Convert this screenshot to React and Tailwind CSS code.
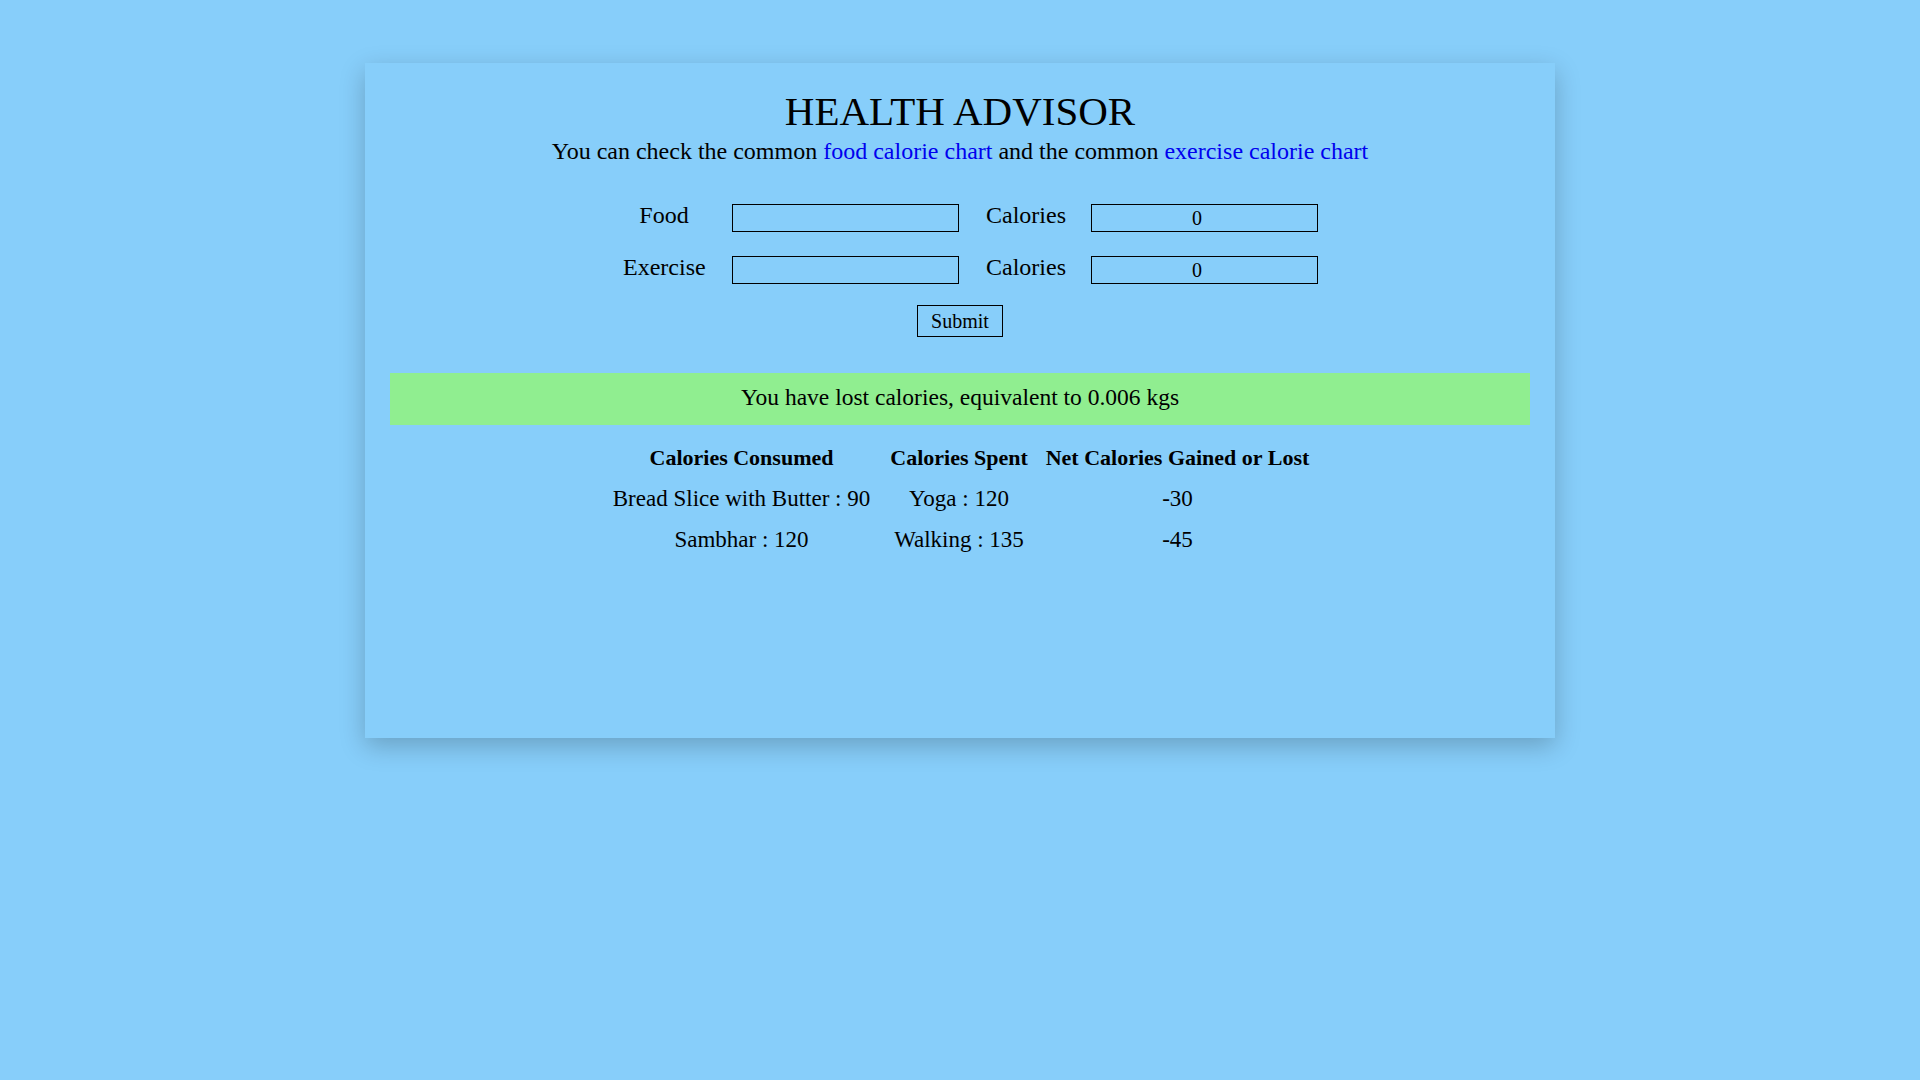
export default function App() {
  return (
    <div className="min-h-screen w-full bg-[#87cefa] pt-[63px] text-black" style={{ fontFamily: '"Liberation Serif", "Times New Roman", serif' }}>
      <div className="mx-auto flex h-[675px] w-[1190px] flex-col bg-[#87cefa] px-[25px] pt-[26px] shadow-[0_8px_24px_rgba(0,0,0,0.22)]">
        <h1 className="text-center text-[41px] font-normal leading-[44px]">HEALTH ADVISOR</h1>
        <p className="mt-[4px] text-center text-[24px] leading-[28px]">
          You can check the common <a className="text-[#0000ee]">food calorie chart</a> and the common{" "}
          <a className="text-[#0000ee]">exercise calorie chart</a>
        </p>

        <div className="ml-[233px] mt-[39px] grid w-fit grid-cols-[82px_227px_78px_227px] gap-x-[27px] gap-y-[24px]">
          <div className="text-center text-[24px] leading-[22px] whitespace-nowrap">Food</div>
          <input type="text" className="h-[28px] w-[227px] border border-black bg-transparent px-[2px] text-[20px] outline-none" />
          <div className="text-center text-[24px] leading-[22px] whitespace-nowrap">Calories</div>
          <input type="number" defaultValue={0} className="h-[28px] w-[227px] border border-black bg-transparent px-[2px] text-center text-[20px] outline-none" />

          <div className="text-center text-[24px] leading-[22px] whitespace-nowrap">Exercise</div>
          <input type="text" className="h-[28px] w-[227px] border border-black bg-transparent px-[2px] text-[20px] outline-none" />
          <div className="text-center text-[24px] leading-[22px] whitespace-nowrap">Calories</div>
          <input type="number" defaultValue={0} className="h-[28px] w-[227px] border border-black bg-transparent px-[2px] text-center text-[20px] outline-none" />
        </div>

        <div className="mt-[21px] flex justify-center">
          <button className="h-[32px] w-[86px] border border-black bg-transparent py-[4px] text-[20px] leading-[22px]">Submit</button>
        </div>

        <div className="mt-[36px] h-[52px] bg-[#90ee90] text-center text-[23.5px] leading-[49px]">
          You have lost calories, equivalent to 0.006 kgs
        </div>

        <div className="mx-auto mt-[12px] grid w-fit grid-cols-[279px_156px_281px] text-center text-[23px] leading-[41px]">
          <div className="text-[22px] font-bold whitespace-nowrap">Calories Consumed</div>
          <div className="text-[22px] font-bold whitespace-nowrap">Calories Spent</div>
          <div className="text-[22px] font-bold whitespace-nowrap">Net Calories Gained or Lost</div>

          <div className="whitespace-nowrap">Bread Slice with Butter : 90</div>
          <div className="whitespace-nowrap">Yoga : 120</div>
          <div className="whitespace-nowrap">-30</div>

          <div className="whitespace-nowrap">Sambhar : 120</div>
          <div className="whitespace-nowrap">Walking : 135</div>
          <div className="whitespace-nowrap">-45</div>
        </div>
      </div>
    </div>
  );
}
